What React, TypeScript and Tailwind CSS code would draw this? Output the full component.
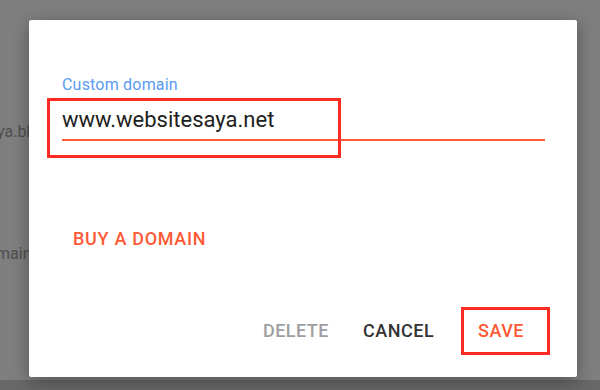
import React from "react";

const font = { fontFamily: "Roboto, 'Noto Sans', sans-serif" };

const App: React.FC = () => {
  return (
    <div className="relative w-[600px] h-[390px] overflow-hidden bg-[#7f7f7f]" style={font}>
      {/* page behind the overlay */}
      <div className="flex flex-col h-full text-[16px] text-[#505050]">
        <div className="mt-[122px] -ml-[3px] leading-[20px]">ya.blogspot.com</div>
        <div className="mt-[102px] -ml-[4px] leading-[20px]">main</div>
        <div className="flex-1" />
        <div className="h-[10px] bg-[#686868]" />
      </div>

      {/* dialog */}
      <div className="absolute left-[29px] top-[20px] w-[548px] h-[357px] bg-white rounded-[2px] shadow-[0_4px_18px_rgba(0,0,0,0.35)] flex flex-col">
        <div className="pl-[33px] pr-[32px] pt-[56px]">
          <div className="text-[16px] leading-[18px] tracking-[0.2px] text-[#5a9af2]">Custom domain</div>
          <div className="mt-[13px] text-[22px] leading-[26px] text-[#212121]">www.websitesaya.net</div>
          <div className="mt-[6px] h-[2px] bg-[#ff5a3a]" />
        </div>

        <div className="mt-[88px] pl-[44px] text-[18px] leading-[20px] font-medium tracking-[0.7px] text-[#ff5a36]">
          BUY A DOMAIN
        </div>

        <div className="flex-1" />

        <div className="flex justify-end items-baseline pr-[53px] pb-[36px] text-[18px] leading-[20px] font-medium tracking-[0.5px]">
          <span className="text-[#9e9e9e]">DELETE</span>
          <span className="ml-[34px] text-[#333333]">CANCEL</span>
          <span className="ml-[44px] text-[#ff5a36]">SAVE</span>
        </div>

        {/* annotation boxes */}
        <div className="absolute left-[18px] top-[78px] w-[294px] h-[60px] border-[3px] border-[#ff2a24]" />
        <div className="absolute left-[432px] top-[287px] w-[89px] h-[48px] border-[3px] border-[#ff2a24]" />
      </div>
    </div>
  );
};

export default App;
